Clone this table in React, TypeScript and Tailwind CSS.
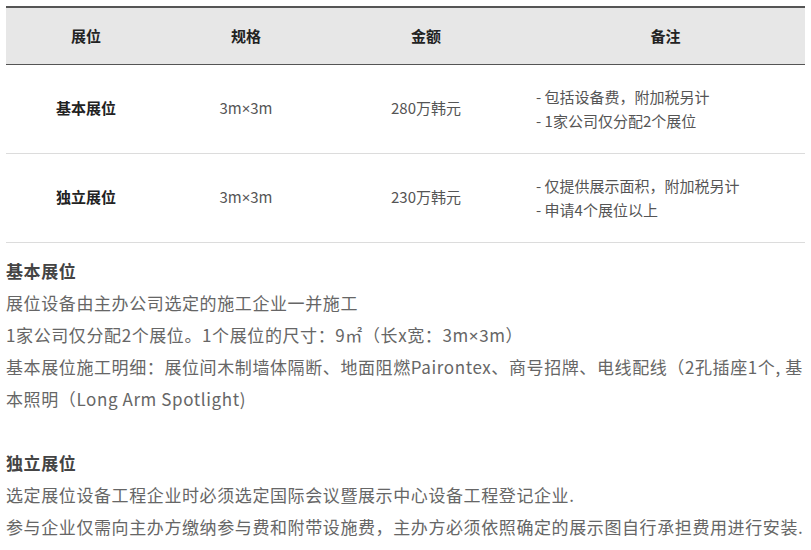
const rows = [
  {
    name: "基本展位",
    price: "280万韩元",
    notes: ["- 包括设备费，附加税另计", "- 1家公司仅分配2个展位"],
  },
  {
    name: "独立展位",
    price: "230万韩元",
    notes: ["- 仅提供展示面积，附加税另计", "- 申请4个展位以上"],
  },
];

// narrow multiplication sign (the CJK font draws it full width)
const X = () => (
  <span className="leading-[0]" style={{ fontFamily: '"Noto Sans", sans-serif' }}>
    ×
  </span>
);

export default function App() {
  return (
    <div
      className="bg-white px-[6px] pt-[6px] text-[#666]"
      style={{ fontFamily: '"Noto Sans CJK SC", "Noto Sans", sans-serif' }}
    >
      {/* table - start */}
      <table className="w-full border-collapse text-[15px]">
        <thead>
          <tr className="h-[57px] border-t-2 border-b border-[#555] bg-[#e7e7e7]">
            <th className="w-[160px] font-bold text-[#222]">展位</th>
            <th className="w-[160px] font-bold text-[#222]">规格</th>
            <th className="w-[200px] font-bold text-[#222]">金额</th>
            <th className="font-bold text-[#222]">备注</th>
          </tr>
        </thead>
        <tbody>
          {rows.map((r) => (
            <tr key={r.name} className="h-[89px] border-b border-[#dcdcdc]">
              <td className="text-center font-bold text-[#222]">{r.name}</td>
              <td className="text-center text-[#555]">
                3m<X />3m
              </td>
              <td className="text-center text-[#555]">{r.price}</td>
              <td className="pl-[10px] leading-6 text-[#555]">
                {r.notes.map((n) => (
                  <div key={n}>{n}</div>
                ))}
              </td>
            </tr>
          ))}
        </tbody>
      </table>
      {/* table - end */}

      <div className="mt-3 text-[17px] leading-[32px] tracking-[0.6px]">
        <h3 className="font-bold text-[#444]">基本展位</h3>
        <p>展位设备由主办公司选定的施工企业一并施工</p>
        <p>
          1家公司仅分配2个展位。1个展位的尺寸：9㎡（长x宽：3m<X />3m）
        </p>
        <p>
          基本展位施工明细：展位间木制墙体隔断、地面阻燃Pairontex、商号招牌、电线配线（2孔插座1个, 基本照明（Long Arm Spotlight)
        </p>

        <h3 className="mt-8 font-bold text-[#444]">独立展位</h3>
        <p>选定展位设备工程企业时必须选定国际会议暨展示中心设备工程登记企业.</p>
        <p>参与企业仅需向主办方缴纳参与费和附带设施费，主办方必须依照确定的展示图自行承担费用进行安装.</p>
      </div>
    </div>
  );
}
